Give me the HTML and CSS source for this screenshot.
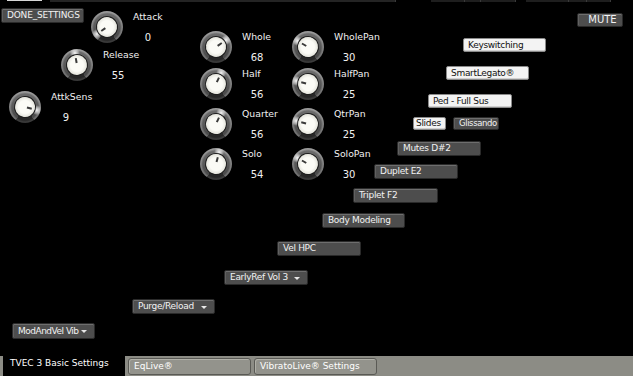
FILE: index.html
```html
<!DOCTYPE html>
<html>
<head>
<meta charset="utf-8">
<link rel="stylesheet" href="styles.css">
</head>
<body>
<div class="app">
  <div class="canvas">
    <div class="strip">
      <span class="seg seg-light"></span>
      <span class="seg seg-long"></span>
      <span class="seg seg-a"></span><span class="seg seg-b"></span><span class="seg seg-c"></span>
      <span class="seg seg-d"></span><span class="seg seg-e"></span><span class="seg seg-f"></span>
    </div>

    <div class="btn dark done">DONE_SETTINGS</div>
    <div class="btn dark mute">MUTE</div>

    <div class="ctl c-attack"><span class="knob" style="--a:-125deg"></span><span class="lbl">Attack</span><span class="val">0</span></div>
    <div class="ctl c-release"><span class="knob" style="--a:-10deg"></span><span class="lbl">Release</span><span class="val">55</span></div>
    <div class="ctl c-attk"><span class="knob" style="--a:105deg"></span><span class="lbl">AttkSens</span><span class="val">9</span></div>

    <div class="ctl c-whole"><span class="knob" style="--a:55deg"></span><span class="lbl">Whole</span><span class="val">68</span></div>
    <div class="ctl c-half"><span class="knob" style="--a:25deg"></span><span class="lbl">Half</span><span class="val">56</span></div>
    <div class="ctl c-quarter"><span class="knob" style="--a:25deg"></span><span class="lbl">Quarter</span><span class="val">56</span></div>
    <div class="ctl c-solo"><span class="knob" style="--a:15deg"></span><span class="lbl">Solo</span><span class="val">54</span></div>

    <div class="ctl c-wpan"><span class="knob" style="--a:-60deg"></span><span class="lbl">WholePan</span><span class="val">30</span></div>
    <div class="ctl c-hpan"><span class="knob" style="--a:-75deg"></span><span class="lbl">HalfPan</span><span class="val">25</span></div>
    <div class="ctl c-qpan"><span class="knob" style="--a:-75deg"></span><span class="lbl">QtrPan</span><span class="val">25</span></div>
    <div class="ctl c-span"><span class="knob" style="--a:-60deg"></span><span class="lbl">SoloPan</span><span class="val">30</span></div>

    <div class="btn light keysw">Keyswitching</div>
    <div class="btn light smart">SmartLegato®</div>
    <div class="btn light ped">Ped - Full Sus</div>
    <div class="btn light slides">Slides</div>
    <div class="btn dark gliss">Glissando</div>
    <div class="btn dark mutes">Mutes D#2</div>
    <div class="btn dark duplet">Duplet E2</div>
    <div class="btn dark triplet">Triplet F2</div>
    <div class="btn dark body">Body Modeling</div>
    <div class="btn dark velhpc">Vel HPC</div>
    <div class="btn dark drop early">EarlyRef Vol 3</div>
    <div class="btn dark drop purge">Purge/Reload</div>
    <div class="btn dark drop modvel">ModAndVel Vib</div>
  </div>
  <div class="tabbar">
    <div class="tab active">TVEC 3 Basic Settings</div>
    <div class="tab">EqLive®</div>
    <div class="tab">VibratoLive® Settings</div>
  </div>
</div>
</body>
</html>
```
FILE: styles.css
```css
* { box-sizing: border-box; }
body {
  margin: 0;
  background: #000;
  color: #fff;
  font-family: "DejaVu Sans", "Liberation Sans", sans-serif;
}
.app {
  width: 633px;
  height: 376px;
  display: flex;
  flex-direction: column;
  overflow: hidden;
  background: #000;
}
.canvas {
  position: relative;
  flex: 1;
}

/* top remnant strip */
.strip {
  position: absolute;
  left: 0; top: 0;
  width: 633px; height: 2px;
  display: flex;
}
.seg { height: 2px; background: #1e1e1e; border-right: 1px solid #3a3a3a; }
.seg-light { margin-left: 7px; width: 35px; background: #d8d8d8; border: none; height: 1px; }
.seg-long { margin-left: 8px; width: 346px; background: #242424; }
.seg-a { margin-left: 35px; width: 34px; }
.seg-b { width: 16px; }
.seg-c { width: 35px; }
.seg-d { margin-left: 10px; width: 43px; }
.seg-e { width: 18px; }
.seg-f { width: 24px; }

/* buttons */
.btn {
  position: absolute;
  height: 15px;
  font-size: 9px;
  letter-spacing: -0.3px;
  line-height: 13px;
  padding: 0 4px;
  white-space: nowrap;
  border-radius: 2px;
}
.btn.dark {
  background: #4d4d4d;
  color: #f2f2f2;
  border: 1px solid #2a2a2a;
  box-shadow: inset 0 1px 0 #6e6e6e, inset 1px 0 0 #606060;
  padding-left: 5px;
}
.btn.light {
  background: #f3f3f3;
  color: #111;
  border: 1px solid #8a8a8a;
  box-shadow: inset 0 -1px 0 #cfcfcf;
}
.btn.drop::after {
  content: "";
  position: absolute;
  right: 7px;
  top: 6px;
  border-left: 3px solid transparent;
  border-right: 3px solid transparent;
  border-top: 3px solid #e8e8e8;
}
.done { left: 1px; top: 8px; width: 83px; padding-left: 6px; border-color: #777; letter-spacing: -0.2px; }
.mute { left: 577px; top: 13px; width: 46px; height: 14px; font-size: 10px; line-height: 12px; text-align: center; padding: 0; letter-spacing: 0; }
.keysw { left: 463px; top: 38px; width: 83px; height: 14px; line-height: 12px; }
.smart { left: 446px; top: 66px; width: 83px; height: 14px; line-height: 12px; }
.ped { left: 428px; top: 94px; width: 84px; height: 14px; line-height: 12px; }
.slides { left: 413px; top: 117px; width: 33px; height: 13px; line-height: 11px; padding: 0 2px; }
.gliss { left: 453px; top: 117px; width: 46px; height: 13px; line-height: 11px; padding: 0 0 0 3px; font-size: 8.5px; letter-spacing: -0.4px; }
.mutes { left: 397px; top: 141px; width: 84px; height: 15px; }
.duplet { left: 374px; top: 164px; width: 84px; }
.triplet { left: 353px; top: 188px; width: 85px; }
.body { left: 322px; top: 213px; width: 83px; }
.velhpc { left: 277px; top: 241px; width: 84px; }
.early { left: 224px; top: 270px; width: 84px; }
.purge { left: 132px; top: 299px; width: 83px; }
.modvel { left: 12px; top: 323px; width: 83px; height: 16px; line-height: 14px; letter-spacing: -0.5px; }

/* knob controls */
.ctl {
  position: absolute;
  display: grid;
  grid-template-columns: 32px auto;
  grid-template-rows: 12px 12px;
  row-gap: 9px;
  column-gap: 10px;
}
.lbl {
  font-size: 9.3px;
  line-height: 12px;
  color: #f0f0f0;
  white-space: nowrap;
}
.val {
  grid-column: 2;
  width: 30px;
  text-align: center;
  font-size: 10px;
  line-height: 12px;
  color: #f0f0f0;
}
.knob {
  grid-row: 1 / span 2;
  position: relative;
  width: 32px;
  height: 32px;
  border-radius: 50%;
  background:
    conic-gradient(from 145deg, rgba(0,0,0,0.45) 0 70deg, rgba(0,0,0,0) 70deg),
    linear-gradient(to bottom, rgba(255,255,255,0.16), rgba(0,0,0,0.25)),
    radial-gradient(circle, #555 0 58%, #8c8c8c 66%, #686868 82%, #333 100%);
}
.knob::before {
  content: "";
  position: absolute;
  inset: 0;
  border-radius: 50%;
  transform: rotate(var(--a));
  background: radial-gradient(circle at 50% 12%, rgba(255,255,255,0.95) 0, rgba(255,255,255,0.45) 3px, rgba(255,255,255,0) 5px);
}
.knob::after {
  content: "";
  position: absolute;
  left: 6px; top: 6px;
  width: 20px; height: 20px;
  border-radius: 50%;
  transform: rotate(var(--a));
  background:
    linear-gradient(#3a3a3a, #3a3a3a) no-repeat 50% 3px / 2px 5px,
    radial-gradient(circle, #fbfbf6 0 45%, #e4e4dc 70%, #a8a8a0 100%);
  box-shadow: 0 0 0 1px #1e1e1e;
}
.c-attack { left: 91px; top: 11px; }
.c-release { left: 61px; top: 49px; }
.c-attk { left: 9px; top: 91px; }
.c-whole { left: 200px; top: 31px; }
.c-half { left: 200px; top: 68px; }
.c-quarter { left: 200px; top: 108px; }
.c-solo { left: 200px; top: 148px; }
.c-wpan { left: 292px; top: 31px; }
.c-hpan { left: 292px; top: 68px; }
.c-qpan { left: 292px; top: 108px; }
.c-span { left: 292px; top: 148px; }

/* tabs */
.tabbar {
  height: 20px;
  background: #8c8c85;
  display: flex;
  align-items: flex-end;
  padding-left: 3px;
  gap: 3px;
}
.tab {
  width: 123px;
  height: 17px;
  margin-bottom: 1px;
  background: #93938c;
  border: 1px solid #5a5a55;
  box-shadow: inset 1px 1px 0 #b0b0a8;
  border-radius: 3px;
  font-size: 9px;
  line-height: 15px;
  padding-left: 5px;
  color: #fff;
  white-space: nowrap;
}
.tab.active {
  width: 122px;
  height: 21px;
  margin-bottom: 0;
  background: #000;
  border: none;
  box-shadow: none;
  border-radius: 0;
  padding-left: 7px;
  line-height: 17px;
}
```
